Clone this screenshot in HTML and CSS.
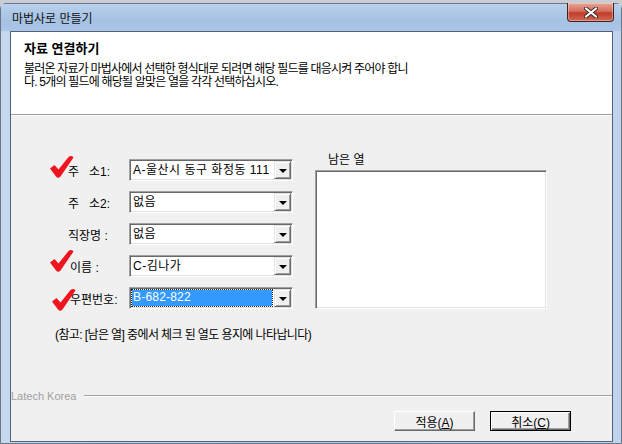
FILE: index.html
```html
<!DOCTYPE html>
<html lang="ko">
<head>
    <meta charset="UTF-8">
    <title>마법사로 만들기</title>
    <link rel="stylesheet" href="styles.css">
</head>
<body>
    <div class="window">
        <div class="titlebar">
            <span class="title">마법사로 만들기</span>
            <span class="close">
                <svg width="14" height="11" viewBox="0 0 14 11">
                    <path d="M2 1.5 L12 9.5 M12 1.5 L2 9.5" stroke="#3a2a28" stroke-width="4" stroke-linecap="round"/>
                    <path d="M2 1.5 L12 9.5 M12 1.5 L2 9.5" stroke="#fff" stroke-width="2.2" stroke-linecap="round"/>
                </svg>
            </span>
        </div>
        <div class="client">
            <!-- 상단 안내 -->
            <div class="header">
                <h1>자료 연결하기</h1>
                <p class="desc">불러온 자료가 마법사에서 선택한 형식대로 되려면 해당 필드를 대응시켜 주어야 합니</p>
                <p class="desc">다. 5개의 필드에 해당될 알맞은 열을 각각 선택하십시오.</p>
            </div>
            <div class="body">
                <div class="main">
                    <div class="fields">
                        <div class="field">
                            <svg class="check" width="24" height="22" viewBox="0 0 24 22"><path d="M0 12.5 L4.5 9 L8.5 13.5 L18.5 1 Q21.5 -1 23.5 1.5 L10.5 20.5 Q8 23 6 20.5 Z" fill="#f0141e"/></svg>
                            <label>주&nbsp;&nbsp;&nbsp;소1:</label>
                            <div class="combo"><span class="value">A-울산시 동구 화정동 111</span><span class="arrow"></span></div>
                        </div>
                        <div class="field">
                            <label>주&nbsp;&nbsp;&nbsp;소2:</label>
                            <div class="combo"><span class="value">없음</span><span class="arrow"></span></div>
                        </div>
                        <div class="field">
                            <label>직장명 :</label>
                            <div class="combo"><span class="value">없음</span><span class="arrow"></span></div>
                        </div>
                        <div class="field">
                            <svg class="check up" width="24" height="22" viewBox="0 0 24 22"><path d="M0 12.5 L4.5 9 L8.5 13.5 L18.5 1 Q21.5 -1 23.5 1.5 L10.5 20.5 Q8 23 6 20.5 Z" fill="#f0141e"/></svg>
                            <label class="shifted">이름 :</label>
                            <div class="combo"><span class="value">C-김나가</span><span class="arrow"></span></div>
                        </div>
                        <div class="field">
                            <svg class="check down" width="24" height="22" viewBox="0 0 24 22"><path d="M0 12.5 L4.5 9 L8.5 13.5 L18.5 1 Q21.5 -1 23.5 1.5 L10.5 20.5 Q8 23 6 20.5 Z" fill="#f0141e"/></svg>
                            <label class="shifted">우편번호:</label>
                            <div class="combo"><span class="value selected">B-682-822</span><span class="arrow"></span></div>
                        </div>
                    </div>
                    <div class="remain">
                        <div class="remain-label">남은 열</div>
                        <div class="listbox"></div>
                    </div>
                </div>
                <p class="note">(참고: [남은 열] 중에서 체크 된 열도 용지에 나타납니다)</p>
                <div class="footer">
                    <div class="brand"><span>Latech Korea</span></div>
                    <div class="buttons">
                        <button type="button">적용(<u>A</u>)</button>
                        <button type="button" class="default">취소(<u>C</u>)</button>
                    </div>
                </div>
            </div>
        </div>
    </div>
</body>
</html>
```

FILE: styles.css
```css
body {
    margin: 0;
    width: 622px;
    height: 444px;
    overflow: hidden;
    background-color: #c9cdd3;
    font-family: "Liberation Sans", "Noto Sans CJK KR", sans-serif;
    font-size: 12px;
    color: #000;
}
.window {
    margin-top: 3px;
    height: 441px;
    box-sizing: border-box;
    display: flex;
    flex-direction: column;
    padding: 0 8px 1px 9px;
    border: 1px solid #6a7684;
    border-radius: 6px 6px 0 0;
    background: linear-gradient(to right, #c4d8ee, #b3cbe7 50%, #c0d5ed);
}
.titlebar {
    height: 27px;
    display: flex;
    align-items: center;
    margin: 0 -8px 0 -9px;
    padding-left: 11px;
    background: linear-gradient(to bottom, #b8d0ec, #a6c2e3 60%, #aac5e5);
}
.title {
    font-size: 12px;
    color: #111;
}
.close {
    align-self: flex-start;
    margin: -1px 7px 0 auto;
    width: 47px;
    height: 19px;
    box-sizing: border-box;
    display: flex;
    align-items: center;
    justify-content: center;
    border: 1px solid #40201c;
    border-top: none;
    border-radius: 0 0 4px 4px;
    background: linear-gradient(to bottom, #e6a596, #d4705f 45%, #c03c28 55%, #cf6a56);
    box-shadow: inset 0 0 0 1px rgba(255, 255, 255, 0.35);
}
.client {
    flex: 1;
    display: flex;
    flex-direction: column;
    border: 1px solid #4f6276;
    background-color: #f0f0f0;
}
.header {
    height: 83px;
    box-sizing: border-box;
    padding: 9px 0 0 13px;
    background-color: #fff;
    border-bottom: 1px solid #a0a0a0;
}
.header h1 {
    margin: 0 0 6px;
    font-size: 13px;
    line-height: 16px;
    font-weight: bold;
}
.desc {
    margin: 0;
    font-size: 12px;
    line-height: 13px;
    letter-spacing: -0.8px;
    white-space: nowrap;
}
.body {
    flex: 1;
    display: flex;
    flex-direction: column;
    border-top: 1px solid #fff;
}
.main {
    display: flex;
    align-items: flex-start;
    padding: 37px 0 0 57px;
}
.fields {
    margin-top: 6px;
    display: flex;
    flex-direction: column;
    gap: 10px;
}
.field {
    position: relative;
    display: flex;
    align-items: center;
    height: 22px;
}
.field label {
    width: 61px;
    font-size: 12px;
    white-space: nowrap;
}
.field label.shifted {
    padding-left: 2px;
    width: 59px;
}
.check {
    position: absolute;
    left: -18px;
    top: -3px;
    z-index: 1;
}
.check.up {
    top: -5px;
}
.check.down {
    top: 2px;
    left: -16px;
}
.combo {
    width: 164px;
    height: 22px;
    box-sizing: border-box;
    display: flex;
    padding: 1px;
    border: 1px solid;
    border-color: #a0a0a0 #fff #fff #a0a0a0;
    box-shadow: inset 1px 1px #696969, inset -1px -1px #e3e3e3;
    background-color: #fff;
}
.value {
    flex: 1;
    overflow: hidden;
    white-space: nowrap;
    padding-left: 2px;
    font-size: 12px;
    line-height: 18px;
    letter-spacing: 0.5px;
}
.value.selected {
    margin: 1px 2px 1px 1px;
    padding-left: 1px;
    line-height: 14px;
    letter-spacing: 0.2px;
    background-color: #3399ff;
    color: #fff;
    outline: 1px dotted #222;
}
.arrow {
    width: 17px;
    height: 18px;
    box-sizing: border-box;
    display: flex;
    align-items: center;
    justify-content: center;
    background-color: #f0f0f0;
    border: 1px solid;
    border-color: #e3e3e3 #696969 #696969 #e3e3e3;
    box-shadow: inset 1px 1px #fff, inset -1px -1px #a0a0a0;
}
.arrow::after {
    content: "";
    border-left: 4px solid transparent;
    border-right: 4px solid transparent;
    border-top: 4px solid #000;
    margin-top: 1px;
}
.remain {
    margin-left: 22px;
}
.remain-label {
    padding-left: 13px;
    font-size: 12px;
    line-height: 14px;
}
.listbox {
    margin-top: 3px;
    width: 232px;
    height: 139px;
    box-sizing: border-box;
    border: 1px solid;
    border-color: #a0a0a0 #fff #fff #a0a0a0;
    box-shadow: inset 1px 1px #696969, inset -1px -1px #e3e3e3;
    background-color: #fff;
}
.note {
    margin: 19px 0 0 44px;
    font-size: 12px;
    line-height: 14px;
    letter-spacing: -0.6px;
}
.footer {
    margin-top: auto;
}
.brand {
    display: flex;
    align-items: center;
    height: 12px;
    color: #a0a0a0;
    font-size: 11px;
}
.brand::after {
    content: "";
    flex: 1;
    margin-left: 8px;
    border-top: 1px solid #a0a0a0;
    border-bottom: 1px solid #fff;
}
.buttons {
    display: flex;
    justify-content: flex-end;
    gap: 15px;
    padding: 9px 41px 10px 0;
}
button {
    width: 81px;
    height: 20px;
    padding: 0;
    font-family: "Liberation Sans", "Noto Sans CJK KR", sans-serif;
    font-size: 12px;
    color: #000;
    background-color: #f0f0f0;
    border: 1px solid;
    border-color: #fff #696969 #696969 #fff;
    box-shadow: inset -1px -1px #a0a0a0;
}
button.default {
    border-color: #000;
    box-shadow: inset 1px 1px #fff, inset -1px -1px #696969, inset -2px -2px #a0a0a0;
}
```
